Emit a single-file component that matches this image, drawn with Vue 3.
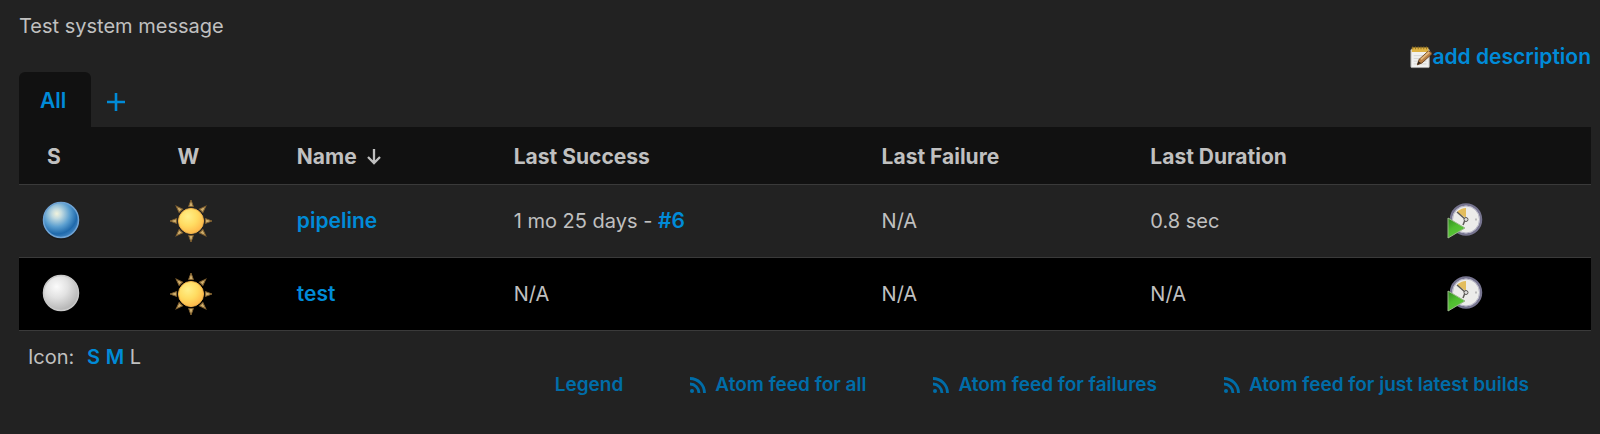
<script setup>
const jobs = [
  { name: 'pipeline', status: 'Success', build: '#6', success: '1 mo 25 days - ', failure: 'N/A', duration: '0.8 sec' },
  { name: 'test', status: 'Not built', build: '', success: 'N/A', failure: 'N/A', duration: 'N/A' },
]
const rays = [0, 45, 90, 135, 180, 225, 270, 315]
const feeds = ['Atom feed for all', 'Atom feed for failures', 'Atom feed for just latest builds']
</script>

<template>
  <main class="page">
    <svg class="defs" aria-hidden="true">
      <defs>
        <radialGradient id="blue" cx="0.38" cy="0.32" r="0.68">
          <stop offset="0" stop-color="#f2f3dc" />
          <stop offset="0.2" stop-color="#c3dbe0" />
          <stop offset="0.55" stop-color="#5b9fd0" />
          <stop offset="0.85" stop-color="#1f69ab" />
          <stop offset="1" stop-color="#3a7fbd" />
        </radialGradient>
        <radialGradient id="grey" cx="0.38" cy="0.32" r="0.7">
          <stop offset="0" stop-color="#fbfbfb" />
          <stop offset="0.45" stop-color="#e2e2e2" />
          <stop offset="1" stop-color="#b4b4b4" />
        </radialGradient>
        <radialGradient id="sun" cx="0.38" cy="0.32" r="0.75">
          <stop offset="0" stop-color="#fff08a" />
          <stop offset="0.5" stop-color="#ffdc62" />
          <stop offset="1" stop-color="#ffb347" />
        </radialGradient>
        <linearGradient id="play" x1="0" y1="0" x2="0.6" y2="1">
          <stop offset="0" stop-color="#2f8a1e" />
          <stop offset="0.5" stop-color="#4fbd2f" />
          <stop offset="1" stop-color="#5fca3c" />
        </linearGradient>
      </defs>
    </svg>

    <p class="message">Test system message</p>
    <div class="describe">
      <a href="#" class="describe-link">
        <svg class="note" viewBox="0 0 24 24" aria-hidden="true">
          <rect x="1" y="3" width="20" height="20" rx="1" fill="#f1f1f0" stroke="#aaa9a6" />
          <path d="M4 10h14M4 13h14M4 16h14M4 19h14" stroke="#d2d2d0" />
          <rect x="2" y="1" width="18" height="5" fill="#dfb344" />
          <path d="M3 0v3M6 0v3M9 0v3M12 0v3M15 0v3M18 0v3" stroke="#8d6c20" />
          <path d="M8 20l2-6L20 5q3 0 4 3L13 18z" fill="#b98147" stroke="#6a421f" />
          <path d="M12 14l9-8" stroke="#e2b87c" stroke-width="2" />
          <path d="M8 20l1-4 3 2z" fill="#33271c" />
        </svg>add description</a>
    </div>

    <nav class="tabs" aria-label="Views">
      <a href="#" class="tab">All</a>
      <a href="#" class="new" aria-label="New view">
        <svg viewBox="0 0 18 18" aria-hidden="true"><path d="M9 0v18M0 9h18" stroke="currentColor" stroke-width="2.600" /></svg>
      </a>
    </nav>

    <table class="jobs">
      <colgroup>
        <col class="c-status"><col class="c-weather"><col class="c-name"><col class="c-success">
        <col class="c-failure"><col class="c-duration"><col>
      </colgroup>
      <thead>
        <tr>
          <th class="short" scope="col">S</th>
          <th class="short" scope="col">W</th>
          <th scope="col">
            <span class="sort">Name
              <svg viewBox="0 0 14 16" aria-hidden="true"><path d="M7 0v14M1 8l6 6 6-6" fill="none" stroke="currentColor" stroke-width="2.300" /></svg>
            </span>
          </th>
          <th scope="col">Last Success</th>
          <th scope="col">Last Failure</th>
          <th scope="col">Last Duration</th>
          <td></td>
        </tr>
      </thead>
      <tbody>
        <tr v-for="job in jobs" :key="job.name">
          <td>
            <svg class="icon" viewBox="0 0 44 44" role="img" :aria-label="job.status">
              <ellipse cx="22" cy="25" rx="17" ry="16" fill="#000" opacity="0.25" />
              <circle v-if="job.build" cx="22" cy="21" r="17.500" fill="url(#blue)" stroke="#6fa3d4" stroke-width="1.500" />
              <circle v-else cx="22" cy="21" r="17.500" fill="url(#grey)" stroke="#c9c9c9" stroke-width="1.500" />
            </svg>
          </td>
          <td>
            <svg class="icon" viewBox="0 0 44 44" role="img" aria-label="Stable">
              <path v-for="r in rays" :key="r" d="M22 1l-2.400 6.600h4.800z" fill="#cfae6c" stroke="#80602f" stroke-width="1" :transform="`rotate(${r} 22 22)`" />
              <circle cx="22" cy="22" r="12.500" fill="url(#sun)" stroke="#f3b54c" />
            </svg>
          </td>
          <td><a href="#">{{ job.name }}</a></td>
          <td>{{ job.success }}<a v-if="job.build" href="#">{{ job.build }}</a></td>
          <td>{{ job.failure }}</td>
          <td>{{ job.duration }}</td>
          <td>
            <button class="build" type="button" :aria-label="`Schedule a build for ${job.name}`">
              <svg class="icon" viewBox="0 0 44 44" aria-hidden="true">
                <circle cx="19" cy="20.500" r="15" fill="#ececea" stroke="#76748f" stroke-width="2.500" />
                <circle cx="19" cy="20.500" r="13.500" fill="none" stroke="#b5b4c6" />
                <path d="M19 19L10 13q4-4 9-4z" fill="#e3bd5d" />
                <path d="M10 13l8 7M18 21l-2 5" stroke="#5c5a56" stroke-width="1.500" />
                <circle cx="19" cy="20.500" r="2" fill="#ddd" stroke="#5c5a56" />
                <path d="M28 20.500h2" stroke="#bbb" stroke-width="2" />
                <path d="M1 19l17 10L1 39z" fill="url(#play)" stroke="#9bb98a" stroke-width="1" />
              </svg>
            </button>
          </td>
        </tr>
      </tbody>
    </table>

    <div class="sizes">Icon: <span class="options"><a href="#">S</a> <a href="#">M</a> L</span></div>

    <footer class="feeds">
      <a href="#">Legend</a>
      <a v-for="feed in feeds" :key="feed" href="#">
        <svg viewBox="0 0 16 16" aria-hidden="true">
          <circle cx="2" cy="14" r="2" fill="currentColor" />
          <path d="M0 1.500A14.500 14.500 0 0 1 14.500 16M0 7A9 9 0 0 1 9 16" fill="none" stroke="currentColor" stroke-width="2.800" />
        </svg>{{ feed }}</a>
    </footer>
  </main>
</template>

<style>
body {
  margin: 0;
  background: #222;
}
</style>

<style scoped>
.page {
  padding: 10px 9px 24px 19px;
  background: #222;
  color: #c0c0c0;
  font: 400 20px/32px Inter, "Liberation Sans", sans-serif;
}
.defs {
  position: absolute;
  width: 0;
  height: 0;
}
a {
  color: #008bd8;
  font-size: 21px;
  font-weight: 600;
  text-decoration: none;
}
.message {
  margin: 0;
}
.describe {
  display: flex;
  justify-content: flex-end;
}
.describe-link {
  display: flex;
  align-items: center;
  line-height: 30px;
}
.note {
  width: 22px;
  height: 23px;
}
.tabs {
  display: flex;
}
.tab {
  padding: 14px 25px 11px 21px;
  border-radius: 6px 6px 0 0;
  background: #111;
  line-height: 30px;
}
.new {
  display: flex;
  align-items: center;
  padding: 4px 16px 0;
}
.new svg {
  width: 18px;
  height: 18px;
}
.jobs {
  width: 100%;
  table-layout: fixed;
  border-collapse: collapse;
}
.c-status { width: 8.3%; }
.c-weather { width: 8.1%; }
.c-name { width: 13.8%; }
.c-success { width: 23.4%; }
.c-failure { width: 17.1%; }
.c-duration { width: 18.9%; }
.jobs tr {
  border-bottom: 1px solid #3a3a3a;
}
.jobs thead {
  background: #111;
}
.jobs th,
.jobs td {
  padding: 14px 0 14px 20px;
  text-align: left;
  font-weight: 400;
}
.jobs th {
  padding: 14px 0 11px 20px;
  font-size: 21px;
  font-weight: 700;
}
.jobs .short {
  padding-left: 28px;
}
.jobs tbody tr:nth-child(even) {
  background: #000;
}
.sort {
  display: flex;
  align-items: center;
  gap: 10px;
}
.sort svg {
  width: 14px;
  height: 16px;
}
.icon {
  display: block;
  width: 44px;
  height: 44px;
}
.build {
  display: block;
  padding: 0;
  border: 0;
  background: none;
}
.sizes {
  padding: 10px 9px 0;
}
.options {
  margin-left: 7px;
}
.sizes a {
  font-size: 20px;
}
.feeds {
  display: flex;
  justify-content: flex-end;
  gap: 67px;
  padding-right: 62px;
  line-height: 24px;
}
.feeds a {
  display: flex;
  align-items: center;
  gap: 9px;
  color: #006da8;
  font-size: 19px;
}
.feeds svg {
  width: 16px;
  height: 16px;
}
</style>
